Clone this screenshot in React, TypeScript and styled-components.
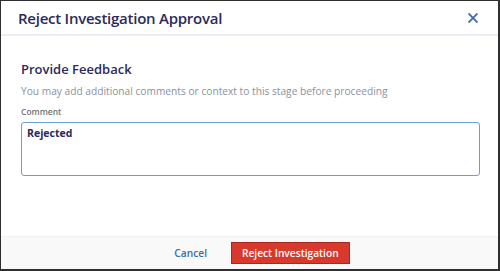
import React from 'react';
import styled, { createGlobalStyle } from 'styled-components';

const GlobalStyle = createGlobalStyle`
    html, body {
        margin: 0;
        padding: 0;
        background: #ffffff;
    }
    body {
        font-family: "Open Sans", "Liberation Sans", sans-serif;
    }
`

const Frame = styled.div`
    width: 500px;
    height: 271px;
    box-sizing: border-box;
    border-style: solid;
    border-color: #2f2f2f;
    border-width: 1px 2px 2px 1px;
    display: flex;
    flex-direction: column;
    background: #ffffff;
    overflow: hidden;
`

const Header = styled.div`
    height: 33px;
    display: flex;
    align-items: center;
    justify-content: space-between;
    padding: 0 20px 0 17px;
    border-bottom: 2px solid #e9eef4;
    flex-shrink: 0;
`

const Title = styled.h1`
    margin: 0;
    font-size: 15px;
    font-weight: 600;
    color: #2b2a5c;
    letter-spacing: -0.25px;
`

const CloseButton = styled.button`
    border: 0;
    background: none;
    padding: 0;
    width: 10px;
    height: 10px;
    display: flex;
    align-items: center;
    justify-content: center;
    cursor: pointer;
`

const Body = styled.div`
    flex: 1;
    padding: 24px 18px 0 20px;
    display: flex;
    flex-direction: column;
`

const SectionTitle = styled.h2`
    margin: 0;
    font-size: 13px;
    font-weight: 600;
    color: #2b2a5c;
    line-height: 18px;
`

const Hint = styled.p`
    margin: 6px 0 0;
    font-size: 10.2px;
    color: #8c919b;
    line-height: 14px;
`

const Label = styled.label`
    margin-top: 8px;
    font-size: 8.5px;
    font-weight: 600;
    color: #6d717a;
    line-height: 11px;
`

const CommentBox = styled.textarea`
    margin-top: 5px;
    height: 54px;
    box-sizing: border-box;
    border: 1px solid #6b9fd4;
    border-radius: 3px;
    padding: 3px 5px;
    font-family: inherit;
    font-size: 10.5px;
    font-weight: 700;
    line-height: 15px;
    color: #2b2a5c;
    resize: none;
    outline: none;
    caret-color: #2b2a5c;
`

const Footer = styled.div`
    height: 32px;
    flex-shrink: 0;
    background: #f9f9f9;
    border-top: 1px solid #f1f1f1;
    display: flex;
    align-items: center;
    justify-content: center;
    gap: 24px;
    padding-left: 25px;
`

const LinkButton = styled.button`
    border: 0;
    background: none;
    padding: 0;
    font-family: inherit;
    font-size: 10.2px;
    font-weight: 600;
    color: #3d6da5;
    cursor: pointer;
`

const DangerButton = styled.button`
    height: 22px;
    padding: 0 10px;
    border: 1px solid #a92820;
    background: #d7392d;
    color: #ffffff;
    font-family: inherit;
    font-size: 10.2px;
    font-weight: 600;
    cursor: pointer;
`

const CloseIcon = () => (
    <svg width="10" height="10" viewBox="0 0 10 10">
        <path d="M1.2 1.2 L8.8 8.8 M8.8 1.2 L1.2 8.8" stroke="#3d6da5" strokeWidth="1.9" strokeLinecap="square" />
    </svg>
)

const App: React.FC = () => {
    return <>
        <GlobalStyle />
        <Frame>
            <Header>
                <Title>Reject Investigation Approval</Title>
                <CloseButton aria-label="Close"><CloseIcon /></CloseButton>
            </Header>
            <Body>
                <SectionTitle>Provide Feedback</SectionTitle>
                <Hint>You may add additional comments or context to this stage before proceeding</Hint>
                <Label htmlFor="comment">Comment</Label>
                <CommentBox id="comment" defaultValue="Rejected" />
            </Body>
            <Footer>
                <LinkButton>Cancel</LinkButton>
                <DangerButton>Reject Investigation</DangerButton>
            </Footer>
        </Frame>
    </>
}

export default App;
